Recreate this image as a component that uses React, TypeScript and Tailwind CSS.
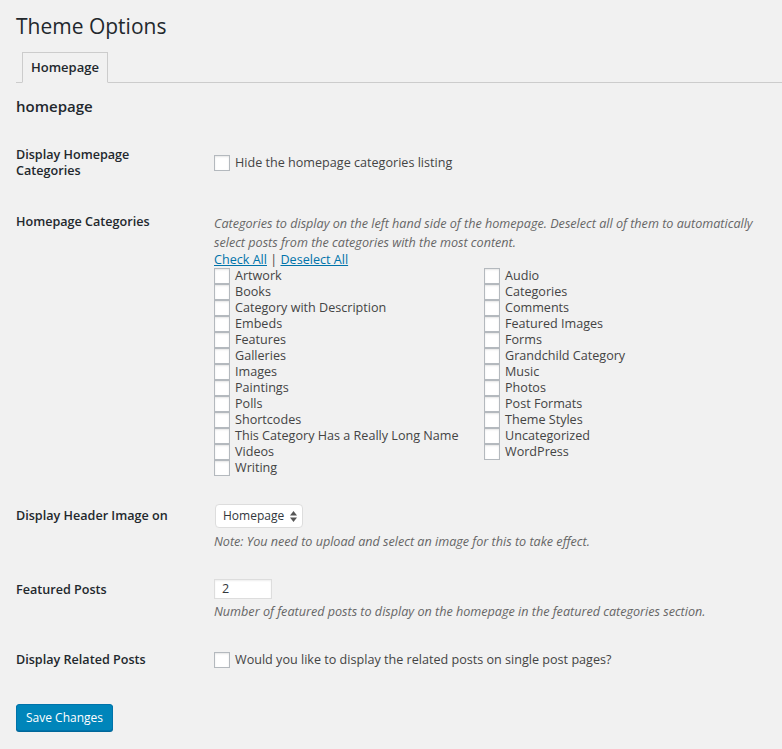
import { ReactNode } from "react";

const leftCats = [
  "Artwork",
  "Books",
  "Category with Description",
  "Embeds",
  "Features",
  "Galleries",
  "Images",
  "Paintings",
  "Polls",
  "Shortcodes",
  "This Category Has a Really Long Name",
  "Videos",
  "Writing",
];

const rightCats = [
  "Audio",
  "Categories",
  "Comments",
  "Featured Images",
  "Forms",
  "Grandchild Category",
  "Music",
  "Photos",
  "Post Formats",
  "Theme Styles",
  "Uncategorized",
  "WordPress",
];

function Box() {
  return (
    <span className="inline-block h-4 w-4 shrink-0 border border-[#b4b9be] bg-white shadow-[inset_0_1px_2px_rgba(0,0,0,0.1)]" />
  );
}

function CheckRow({ label }: { label: string }) {
  return (
    <label className="flex h-4 items-center gap-[5px] leading-4">
      <Box />
      <span className="whitespace-nowrap leading-4">{label}</span>
    </label>
  );
}

function Row({ label, children, className }: { label: string; children: ReactNode; className?: string }) {
  return (
    <div className={`flex ${className ?? ""}`}>
      <div className="w-[198px] shrink-0 pr-[40px] text-[12.6px] font-semibold leading-4 text-[#23282d]">{label}</div>
      <div className="min-w-0 flex-1">{children}</div>
    </div>
  );
}

export default function App() {
  return (
    <div
      className="min-h-screen bg-[#f1f1f1] pl-4 text-[12.6px] text-[#444]"
      style={{ fontFamily: '"Open Sans", "Noto Sans", sans-serif' }}
    >
      <h1 className="pt-[11px] text-[21px] font-normal leading-[30px] text-[#23282d]">Theme Options</h1>

      <div className="mt-[11px] flex border-b border-[#ccc] pl-[6px]">
        <div className="-mb-px h-[31px] border border-b-[#f1f1f1] border-[#ccc] bg-[#f1f1f1] px-[8px] text-[13px] font-semibold leading-[29px] text-[#23282d]">
          Homepage
        </div>
      </div>

      <h2 className="mt-3 text-[15px] font-semibold leading-[22px] text-[#23282d]">homepage</h2>

      <Row label="Display Homepage Categories" className="mt-[30px]">
        <div className="pt-2">
          <CheckRow label="Hide the homepage categories listing" />
        </div>
      </Row>

      <Row label="Homepage Categories" className="mt-[35px]">
        <p className="italic leading-[19px] text-[#666]">
          Categories to display on the left hand side of the homepage. Deselect all of them to automatically select posts
          from the categories with the most content.
        </p>
        <div className="leading-4">
          <a href="#" className="text-[#0073aa] underline">Check All</a>
          <span> | </span>
          <a href="#" className="text-[#0073aa] underline">Deselect All</a>
        </div>
        <div className="flex">
          <div className="w-[270px]">
            {leftCats.map((c) => (
              <CheckRow key={c} label={c} />
            ))}
          </div>
          <div>
            {rightCats.map((c) => (
              <CheckRow key={c} label={c} />
            ))}
          </div>
        </div>
      </Row>

      <Row label="Display Header Image on" className="mt-[28px] [&>div:first-child]:pt-1">
        <div className="ml-px flex h-6 w-[88px] items-center justify-between rounded-[4px] border border-[#ddd] bg-white pl-[7px] pr-[5px] text-[12px] text-[#32373c]">
          <span>Homepage</span>
          <svg width="7" height="11" viewBox="0 0 7 11" fill="#555">
            <path d="M3.5 0 L7 4.5 H0 Z" />
            <path d="M0 6.5 H7 L3.5 11 Z" />
          </svg>
        </div>
        <p className="mt-1 italic leading-[19px] text-[#666]">
          Note: You need to upload and select an image for this to take effect.
        </p>
      </Row>

      <Row label="Featured Posts" className="mt-[28px] [&>div:first-child]:pt-[3px]">
        <div className="flex h-5 w-[58px] items-center border border-[#ddd] bg-white pl-[7px] text-[#32373c] shadow-[inset_0_1px_2px_rgba(0,0,0,0.07)]">
          2
        </div>
        <p className="mt-[3px] italic leading-[19px] text-[#666]">
          Number of featured posts to display on the homepage in the featured categories section.
        </p>
      </Row>

      <Row label="Display Related Posts" className="mt-[27px] [&>div:first-child]:pt-1">
        <div className="pt-1">
          <CheckRow label="Would you like to display the related posts on single post pages?" />
        </div>
      </Row>

      <button
        type="button"
        className="mt-[36px] h-[27px] rounded-[3px] border border-[#0073aa] bg-[#0085ba] px-[9px] text-[12px] leading-[25px] text-white shadow-[0_1px_0_#006799]"
      >
        Save Changes
      </button>
    </div>
  );
}
